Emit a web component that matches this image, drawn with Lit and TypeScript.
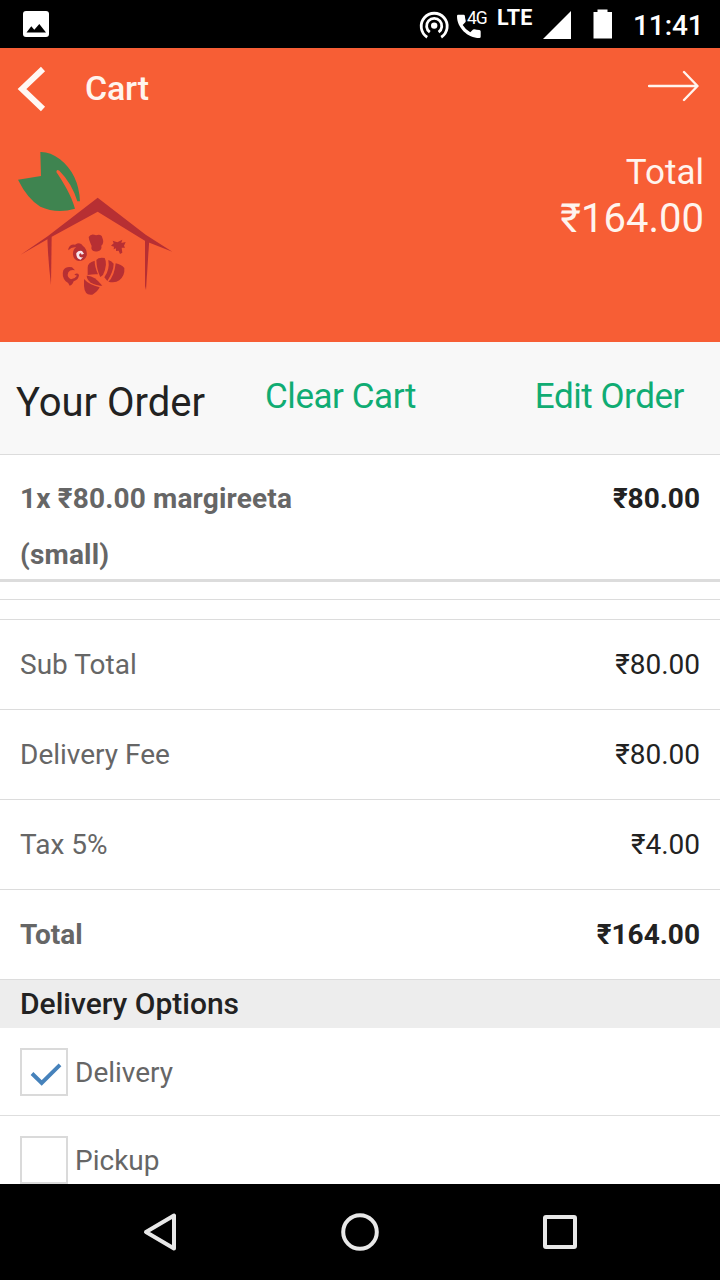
import { LitElement, html, css } from "lit";
import { customElement, property } from "lit/decorators.js";

interface CartLine {
  label: string;
  amount: string;
  strong?: boolean;
}

const TOTALS: CartLine[] = [
  { label: "Sub Total", amount: "₹80.00" },
  { label: "Delivery Fee", amount: "₹80.00" },
  { label: "Tax 5%", amount: "₹4.00" },
  { label: "Total", amount: "₹164.00", strong: true },
];

@customElement("status-bar")
class StatusBar extends LitElement {
  static styles = css`
    :host {
      display: flex;
      align-items: center;
      height: 48px;
      background: #000;
      color: #fff;
      flex: none;
    }
    svg { display: block; flex: none; }
    .picture { margin-left: 20px; }
    .spacer { flex: 1; }
    .network { display: flex; align-items: flex-start; height: 48px; }
    .fourg { font-size: 17.5px; line-height: 20px; margin: 8px 0 0 -16px; width: 20px; letter-spacing: -1.2px; }
    .lte { font-size: 21.5px; font-weight: 700; line-height: 24px; margin: 6px 0 0 10px; width: 36px; letter-spacing: 0.4px; }
    .signal { margin-left: 10px; }
    .battery { margin-left: 22px; }
    .clock { font-size: 28px; font-weight: 500; line-height: 48px; margin: 3px 0 0 20px; width: 87px; letter-spacing: -0.1px; }
  `;
  render() {
    return html`
      <svg class="picture" width="32" height="48" viewBox="20 0 32 48">
        <rect x="23" y="11" width="26" height="26" rx="3" fill="#fff" />
        <path d="M26.5 32.5L31.3 26.3L34.3 29.8L39.3 24L46 32.5Z" fill="#000" />
      </svg>
      <span class="spacer"></span>
      <svg width="36" height="48" viewBox="416 0 36 48" fill="none" stroke="#fff" stroke-width="2.8">
        <path d="M427.2 37.2A13 13 0 1 1 441.2 37.2" />
        <path d="M429.8 32.2A7.6 7.6 0 1 1 438.6 32.2" />
        <circle cx="434.2" cy="25.6" r="3.2" fill="#fff" stroke="none" />
      </svg>
      <div class="network">
        <svg width="31" height="48" viewBox="452 0 31 48">
          <path d="M458 14.8h5.6q1.2 0 1.3 1.2q.1 2.600.8 4.700q.2.9-.4 1.600l-2.600 2.600q3.200 5.200 7.600 7.300l2.500-2.500q.7-.7 1.600-.4q2.200.7 5 .8q1.300.1 1.300 1.300v5q0 1.600-1.300 1.600C467.500 38 457 27.500 457 16.200Q457 14.800 458 14.800Z" fill="#fff" />
        </svg>
        <span class="fourg">4G</span>
        <span class="lte">LTE</span>
      </div>
      <svg class="signal" width="28" height="48" viewBox="543 0 28 48"><path d="M543 39L571 11V39Z" fill="#fff" /></svg>
      <svg class="battery" width="20" height="48" viewBox="593 0 20 48">
        <path d="M593.500 12h4V9.500h10V12h4.500v26.500h-18.500V12Z" fill="#fff" />
      </svg>
      <span class="clock">11:41</span>
    `;
  }
}

@customElement("shop-logo")
class ShopLogo extends LitElement {
  static styles = css`
    :host { display: block; width: 190px; height: 170px; }
    svg { display: block; }
  `;
  render() {
    return html`
      <svg width="190" height="170" viewBox="0 0 570 510">
        <g fill="#3f8450">
          <path d="M121 36Q150 35 180 58Q236 102 240 184L232 184Q216 130 178 92Q170 86 169 96C190 128 214 166 225 206Q170 222 121 200Q82 176 54 119L123 108Z" />
        </g>
        <g fill="#b72f33">
          <path d="M62 344L144 288L293 173L437 284L517 335L437 304L293 215L154 291Z" />
          <path d="M142 292L155 290L153 435Q144 360 142 292Z" />
          <path d="M435 288L448 296L438 450L435 438Z" />
          <path d="M266 291Q273 279 288 286Q304 281 307 293Q314 309 304 317Q307 330 294 334Q277 337 274 325Q277 318 272 311Q267 302 266 291Z" />
          <path d="M333 317L341 310L338 302L352 307L367 299L364 309L377 306L372 317L375 323L365 323L367 338L360 342L356 332L348 333L348 325L341 328L342 320Z" />
          <path d="M205 326Q211 311 225 314Q241 304 249 318Q263 329 260 347Q254 363 236 363Q220 359 219 344Q218 328 229 322Q216 319 205 331Z" />
          <path d="M190 391Q198 378 216 382L225 391Q211 388 205 397Q199 412 213 418Q224 417 231 407L223 404Q232 397 237 405Q236 419 221 424Q216 437 209 437Q206 428 197 424Q184 410 190 391Z" />
          <path d="M263 383Q262 368 284 362Q284 380 294 403Q280 402 263 405Z" />
          <path d="M289 360Q295 351 314 354Q324 372 309 405L301 411Q290 390 289 360Z" />
          <path d="M325 360Q336 363 341 371Q341 393 322 423L313 412Q330 389 325 360Z" />
          <path d="M347 370Q364 373 373 384Q375 407 358 421Q346 430 325 425Q343 410 347 370Z" />
          <path d="M260 407Q282 405 307 437Q299 438 279 431Q260 422 260 407Z" />
          <path d="M252 417Q267 434 299 442Q293 455 277 464Q254 468 252 438Z" />
        </g>
        <path d="M229 339Q236 330 246 333L252 341L245 344Q241 335 237 345Q239 355 249 351L242 359Q228 357 229 339Z" fill="#f6e6ee" />
      </svg>
    `;
  }
}

@customElement("option-row")
class OptionRow extends LitElement {
  @property() label = "";
  @property({ type: Boolean }) checked = false;
  static styles = css`
    :host {
      display: flex;
      align-items: center;
      box-sizing: border-box;
      height: 88px;
      padding: 1px 20px 0;
      border-bottom: 1px solid #dedede;
      color: #666;
      font-size: 28px;
    }
    .box {
      box-sizing: border-box;
      width: 48px;
      height: 48px;
      border: 2px solid #dadada;
      margin-right: 7px;
      background: #fff;
    }
    .box svg { display: block; }
  `;
  render() {
    return html`
      <span class="box">
        ${this.checked
          ? html`<svg width="44" height="44" viewBox="22 1050 44 44" fill="none">
              <path d="M32 1073.500L41.700 1083L60 1064.800" stroke="#4682bb" stroke-width="3.900" />
            </svg>`
          : null}
      </span>
      <span>${this.label}</span>
    `;
  }
}

@customElement("app-root")
class AppRoot extends LitElement {
  static styles = css`
    :host {
      display: flex;
      flex-direction: column;
      width: 720px;
      height: 1280px;
      overflow: hidden;
      background: #fff;
      font-family: Roboto, "Noto Sans", sans-serif;
      color: #222;
    }
    svg { display: block; flex: none; }
    .hero { background: #f75e35; color: #fff4ee; height: 294px; flex: none; }
    .toolbar { display: flex; align-items: center; height: 80px; padding: 0 20px 0 17px; }
    .title { font-size: 34px; font-weight: 500; line-height: 40px; margin-left: 38px; flex: 1; letter-spacing: -0.2px; }
    .summary { display: flex; justify-content: space-between; padding: 12px 16px 0 0; }
    .grand { display: flex; flex-direction: column; align-items: flex-end; padding-top: 11px; }
    .grand-label { font-size: 35px; line-height: 44px; }
    .grand-value { font-size: 40px; line-height: 48px; }
    .order-head {
      display: grid;
      grid-template-columns: 249px 1fr auto;
      box-sizing: border-box;
      height: 113px;
      padding: 0 36px 0 16px;
      background: #f8f8f8;
      border-bottom: 1px solid #dcdcdc;
      flex: none;
    }
    .order-title { font-size: 40px; line-height: 122px; }
    .action { font-size: 35px; line-height: 110px; color: #10ac73; letter-spacing: -0.45px; }
    .main { flex: 1; min-height: 0; overflow: hidden; }
    .item {
      display: flex;
      justify-content: space-between;
      box-sizing: border-box;
      height: 127px;
      padding: 16px 20px 0;
      border-bottom: 3px solid #dcdcdc;
      font-size: 28px;
      font-weight: 700;
      line-height: 56px;
    }
    .item-name { width: 330px; color: #666; letter-spacing: 0.17px; }
    .gap { box-sizing: border-box; border-bottom: 1px solid #dcdcdc; }
    .gap-a { height: 18px; }
    .gap-b { height: 20px; }
    .line {
      display: flex;
      justify-content: space-between;
      align-items: center;
      box-sizing: border-box;
      height: 90px;
      padding: 0 20px;
      border-bottom: 1px solid #dcdcdc;
      font-size: 28px;
    }
    .line-label { color: #666; }
    .strong { font-weight: 700; }
    .section {
      height: 48px;
      line-height: 48px;
      padding: 0 20px;
      background: #ededed;
      font-size: 30px;
      font-weight: 500;
    }
    .nav { display: flex; justify-content: center; background: #000; height: 96px; flex: none; gap: 152px; }
  `;
  render() {
    return html`
      <status-bar></status-bar>
      <header class="hero">
        <div class="toolbar">
          <svg width="30" height="48" viewBox="17 64 30 48" fill="none">
            <path d="M43 69L22 89L43 109" stroke="#fff8f4" stroke-width="6" />
          </svg>
          <span class="title">Cart</span>
          <svg width="52" height="40" viewBox="648 68 52 40" fill="none" stroke="#fff4ee" stroke-width="2.400" stroke-linecap="round" stroke-linejoin="round">
            <path d="M649 86H697M684 72L697.500 86L684 100" />
          </svg>
        </div>
        <div class="summary">
          <shop-logo></shop-logo>
          <div class="grand">
            <span class="grand-label">Total</span>
            <span class="grand-value">₹164.00</span>
          </div>
        </div>
      </header>
      <div class="order-head">
        <span class="order-title">Your Order</span>
        <span class="action">Clear Cart</span>
        <span class="action">Edit Order</span>
      </div>
      <main class="main">
        <div class="item">
          <span class="item-name">1x ₹80.00 margireeta (small)</span>
          <span>₹80.00</span>
        </div>
        <div class="gap gap-a"></div>
        <div class="gap gap-b"></div>
        ${TOTALS.map(
          (t) => html`<div class="line ${t.strong ? "strong" : ""}">
            <span class="line-label">${t.label}</span><span>${t.amount}</span>
          </div>`
        )}
        <div class="section">Delivery Options</div>
        <option-row label="Delivery" checked></option-row>
        <option-row label="Pickup"></option-row>
      </main>
      <nav class="nav">
        <svg width="48" height="96" viewBox="136 1184 48 96" fill="none">
          <path d="M174 1215.500V1248.500L146 1232Z" stroke="#e8e8e8" stroke-width="4" stroke-linejoin="round" />
        </svg>
        <svg width="48" height="96" viewBox="336 1184 48 96" fill="none">
          <circle cx="360" cy="1232" r="16.800" stroke="#e8e8e8" stroke-width="4" />
        </svg>
        <svg width="48" height="96" viewBox="536 1184 48 96" fill="none">
          <rect x="545" y="1217" width="30" height="30" rx="1" stroke="#e8e8e8" stroke-width="4" />
        </svg>
      </nav>
    `;
  }
}
